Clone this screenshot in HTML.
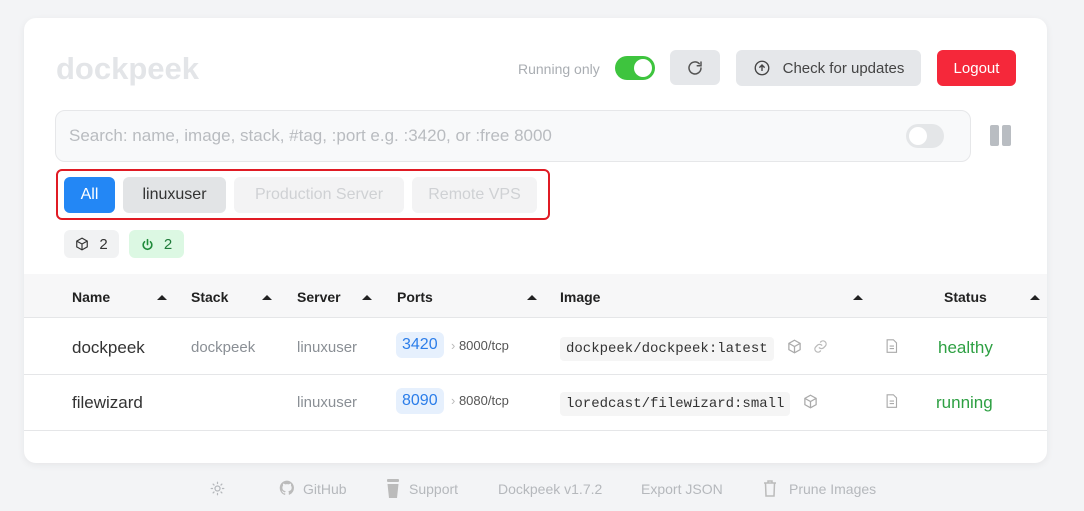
<!DOCTYPE html>
<html><head><meta charset="utf-8"><style>
*{box-sizing:border-box;margin:0;padding:0}
body{width:1084px;height:511px;background:#f3f4f6;font-family:"Liberation Sans",sans-serif;position:relative;overflow:hidden;color:#212529}
.a{position:absolute}
.card{left:24px;top:18px;width:1023px;height:445px;background:#fff;border-radius:12px;box-shadow:0 2px 8px rgba(0,0,0,.06)}
.btn{position:absolute;border-radius:6px;display:flex;align-items:center;justify-content:center;font-size:15px}
.th{position:absolute;top:289px;font-size:14px;font-weight:bold;color:#222}
.ar{position:absolute;top:295px;width:0;height:0;border-left:5px solid transparent;border-right:5px solid transparent;border-bottom:5px solid #222}
.port{position:absolute;background:#e6f0fd;color:#2b7de9;font-size:16px;border-radius:6px;padding:4px 6px}
.code{position:absolute;background:#f5f5f5;font-family:"Liberation Mono",monospace;font-size:14px;color:#333;padding:4px 6px;border-radius:4px}
.f{position:absolute;top:481px;font-size:14px;color:#b5b8bc}
</style></head><body>
<div class="a card"></div>
<div class="a" style="left:56px;top:51px;font-size:31px;font-weight:bold;color:#e3e5e8">dockpeek</div>
<div class="a" style="left:518px;top:61px;font-size:14px;color:#a9adb2">Running only</div>
<div class="a" style="left:615px;top:56px;width:40px;height:24px;border-radius:12px;background:#3ec43e"><div class="a" style="right:3px;top:3px;width:18px;height:18px;border-radius:50%;background:#fff"></div></div>
<div class="btn" style="left:670px;top:50px;width:50px;height:35px;background:#e5e7ea"><svg width="18" height="18" viewBox="0 0 24 24" fill="none" stroke="#555" stroke-width="2" stroke-linecap="round"><path d="M20 12a8 8 0 1 1-2.3-5.7"/><path d="M20 4v5h-5"/></svg></div>
<div class="btn" style="left:736px;top:50px;width:185px;height:36px;background:#e5e7ea;color:#444"><svg width="18" height="18" viewBox="0 0 24 24" fill="none" stroke="#444" stroke-width="1.8" style="margin-right:12px"><circle cx="12" cy="12" r="9"/><path d="M12 16V8M8.5 11.5 12 8l3.5 3.5"/></svg>Check for updates</div>
<div class="btn" style="left:937px;top:50px;width:79px;height:36px;background:#f5283a;color:#fff">Logout</div>
<div class="a" style="left:55px;top:110px;width:916px;height:52px;border:1px solid #e6e7e9;border-radius:10px;background:#f8f9fa"></div>
<div class="a" style="left:69px;top:126px;font-size:17px;color:#b9bcc0">Search: name, image, stack, #tag, :port e.g. :3420, or :free 8000</div>
<div class="a" style="left:906px;top:124px;width:38px;height:24px;border-radius:12px;background:#e4e6e8"><div class="a" style="left:3px;top:3px;width:18px;height:18px;border-radius:50%;background:#fff"></div></div>
<div class="a" style="left:990px;top:125px;width:9px;height:21px;background:#b9bdc2;border-radius:2px"></div>
<div class="a" style="left:1002px;top:125px;width:9px;height:21px;background:#b9bdc2;border-radius:2px"></div>
<div class="a" style="left:56px;top:169px;width:494px;height:51px;border:2px solid #e01b24;border-radius:6px"></div>
<div class="btn" style="left:64px;top:177px;width:51px;height:36px;background:#2387f5;color:#fff;font-size:16px">All</div>
<div class="btn" style="left:123px;top:177px;width:103px;height:36px;background:#e2e4e6;color:#333;font-size:16px">linuxuser</div>
<div class="btn" style="left:234px;top:177px;width:170px;height:36px;background:#f3f3f4;color:#cfd1d4;font-size:16px">Production Server</div>
<div class="btn" style="left:412px;top:177px;width:125px;height:36px;background:#f3f3f4;color:#cfd1d4;font-size:16px">Remote VPS</div>
<div class="btn" style="left:64px;top:230px;width:55px;height:28px;background:#f1f2f3;color:#333;font-size:15px"><svg width="14" height="14" viewBox="0 0 24 24" fill="none" stroke="#333" stroke-width="2" style="margin-right:10px"><path d="M12 2 21 7v10l-9 5-9-5V7z"/><path d="M3 7l9 5 9-5M12 12v10"/></svg>2</div>
<div class="btn" style="left:129px;top:230px;width:55px;height:28px;background:#dcf8e3;color:#1f7a3a;font-size:15px"><svg width="13" height="13" viewBox="0 0 24 24" fill="none" stroke="#1f8a3a" stroke-width="3" stroke-linecap="round" style="margin-right:10px"><path d="M12 3v9"/><path d="M6.5 7a8 8 0 1 0 11 0"/></svg>2</div>
<div class="a" style="left:24px;top:274px;width:1023px;height:44px;background:#f7f7f8;border-bottom:1px solid #e5e6e8"></div>
<div class="th" style="left:72px">Name</div><div class="ar" style="left:157px"></div>
<div class="th" style="left:191px">Stack</div><div class="ar" style="left:262px"></div>
<div class="th" style="left:297px">Server</div><div class="ar" style="left:362px"></div>
<div class="th" style="left:397px">Ports</div><div class="ar" style="left:527px"></div>
<div class="th" style="left:560px">Image</div><div class="ar" style="left:853px"></div>
<div class="th" style="left:944px">Status</div><div class="ar" style="left:1030px"></div>
<div class="a" style="left:24px;top:374px;width:1023px;height:1px;background:#e5e6e8"></div>
<div class="a" style="left:24px;top:430px;width:1023px;height:1px;background:#e5e6e8"></div>
<div class="a" style="left:72px;top:338px;font-size:17px;color:#333">dockpeek</div>
<div class="a" style="left:191px;top:339px;font-size:15px;color:#8a8f95">dockpeek</div>
<div class="a" style="left:297px;top:339px;font-size:15px;color:#8a8f95">linuxuser</div>
<div class="port" style="left:396px;top:332px">3420</div>
<div class="a" style="left:451px;top:338px;font-size:13px;color:#555"><span style="color:#bbb">›</span> 8000/tcp</div>
<div class="code" style="left:560px;top:337px">dockpeek/dockpeek:latest</div>
<div class="a" style="left:72px;top:393px;font-size:17px;color:#333">filewizard</div>
<div class="a" style="left:297px;top:394px;font-size:15px;color:#8a8f95">linuxuser</div>
<div class="port" style="left:396px;top:388px">8090</div>
<div class="a" style="left:451px;top:393px;font-size:13px;color:#555"><span style="color:#bbb">›</span> 8080/tcp</div>
<div class="code" style="left:560px;top:392px">loredcast/filewizard:small</div>
<svg class="a" style="left:787px;top:339px" width="15" height="15" viewBox="0 0 24 24" fill="none" stroke="#aaa" stroke-width="2"><path d="M12 2 21 7v10l-9 5-9-5V7z"/><path d="M3 7l9 5 9-5M12 12v10"/></svg>
<svg class="a" style="left:813px;top:339px" width="15" height="15" viewBox="0 0 24 24" fill="none" stroke="#bbb" stroke-width="2" stroke-linecap="round"><path d="M10 14a5 5 0 0 0 7 0l3-3a5 5 0 0 0-7-7l-1 1"/><path d="M14 10a5 5 0 0 0-7 0l-3 3a5 5 0 0 0 7 7l1-1"/></svg>
<svg class="a" style="left:803px;top:394px" width="15" height="15" viewBox="0 0 24 24" fill="none" stroke="#aaa" stroke-width="2"><path d="M12 2 21 7v10l-9 5-9-5V7z"/><path d="M3 7l9 5 9-5M12 12v10"/></svg>
<svg class="a" style="left:884px;top:338px" width="15" height="16" viewBox="0 0 24 24" fill="none" stroke="#aaa" stroke-width="1.8"><path d="M5 2h10l5 5v15H5z"/><path d="M9 12h7M9 16h7"/></svg>
<svg class="a" style="left:884px;top:393px" width="15" height="16" viewBox="0 0 24 24" fill="none" stroke="#aaa" stroke-width="1.8"><path d="M5 2h10l5 5v15H5z"/><path d="M9 12h7M9 16h7"/></svg>
<div class="a" style="left:938px;top:338px;font-size:17px;color:#2ea043">healthy</div>
<div class="a" style="left:936px;top:393px;font-size:17px;color:#2ea043">running</div>
<svg class="a" style="left:210px;top:481px" width="15" height="15" viewBox="0 0 24 24" fill="none" stroke="#b5b8bc" stroke-width="2" stroke-linecap="round"><circle cx="12" cy="12" r="4"/><path d="M12 2v2M12 20v2M2 12h2M20 12h2M5 5l1.4 1.4M17.6 17.6 19 19M5 19l1.4-1.4M17.6 6.4 19 5"/></svg>
<svg class="a" style="left:279px;top:480px" width="16" height="16" viewBox="0 0 24 24" fill="#bbb"><path d="M12 1a11 11 0 0 0-3.5 21.4c.6.1.8-.2.8-.5v-2c-3 .7-3.700-1.4-3.7-1.4-.5-1.3-1.2-1.6-1.2-1.6-1-.7.1-.7.1-.7 1.1.1 1.7 1.1 1.7 1.1 1 1.7 2.6 1.2 3.2.9.1-.7.4-1.2.7-1.5-2.4-.3-5-1.200-5-5.4 0-1.2.4-2.2 1.1-2.9-.1-.3-.5-1.4.1-2.9 0 0 .9-.3 3 1.1a10 10 0 0 1 5.5 0c2.1-1.4 3-1.1 3-1.1.6 1.5.2 2.6.1 2.9.7.8 1.1 1.7 1.1 2.9 0 4.2-2.6 5.1-5 5.4.4.3.7 1 .7 2v3c0 .3.2.6.8.5A11 11 0 0 0 12 1z"/></svg>
<div class="f" style="left:303px">GitHub</div>
<svg class="a" style="left:386px;top:479px" width="14" height="19" viewBox="0 0 14 19" fill="#bbb"><rect x="1" y="0" width="12" height="3" rx="1"/><path d="M1.5 5h11l-1.5 14h-8z"/></svg>
<div class="f" style="left:409px">Support</div>
<div class="f" style="left:498px">Dockpeek v1.7.2</div>
<div class="f" style="left:641px">Export JSON</div>
<svg class="a" style="left:763px;top:480px" width="14" height="17" viewBox="0 0 14 17" fill="none" stroke="#bbb" stroke-width="1.5"><path d="M1 3h12M5 3V1h4v2M2.5 3l.5 13h8l.5-13"/></svg>
<div class="f" style="left:789px">Prune Images</div>
</body></html>
